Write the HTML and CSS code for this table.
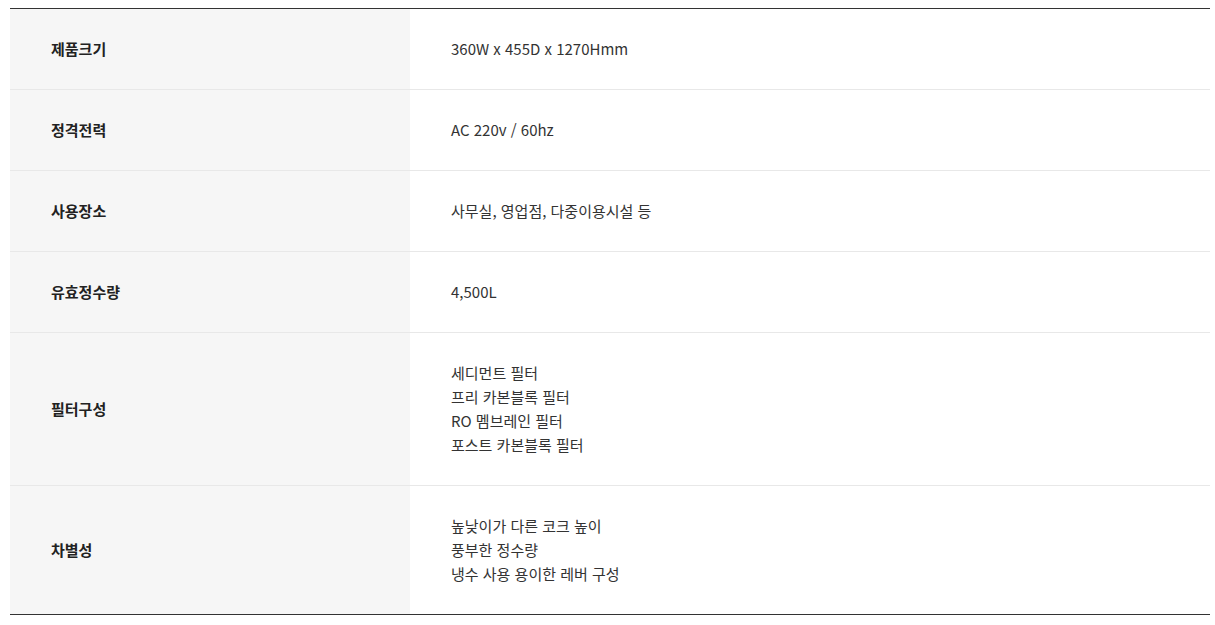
FILE: index.html
```html
<!DOCTYPE html>
<html lang="ko">
<head>
<meta charset="utf-8">
<link rel="stylesheet" href="styles.css">
</head>
<body>
<div class="wrap">
<table class="spec">
<tbody>
<tr><th>제품크기</th><td>360W x 455D x 1270Hmm</td></tr>
<tr><th>정격전력</th><td>AC 220v / 60hz</td></tr>
<tr><th>사용장소</th><td>사무실, 영업점, 다중이용시설 등</td></tr>
<tr><th>유효정수량</th><td>4,500L</td></tr>
<tr><th>필터구성</th><td>세디먼트 필터<br>프리 카본블록 필터<br>RO 멤브레인 필터<br>포스트 카본블록 필터</td></tr>
<tr><th>차별성</th><td>높낮이가 다른 코크 높이<br>풍부한 정수량<br>냉수 사용 용이한 레버 구성</td></tr>
</tbody>
</table>
</div>
</body>
</html>
```

FILE: styles.css
```css
html, body {
  margin: 0;
  padding: 0;
  background: #fff;
}
.wrap {
  padding: 8px 5px 0 10px;
}
.spec {
  width: 1200px;
  border-collapse: collapse;
  border-top: 1px solid #333;
  border-bottom: 1px solid #333;
  font-family: "Noto Sans CJK KR", "Noto Sans", sans-serif;
  font-size: 15px;
  line-height: 24px;
  letter-spacing: 0;
}
.spec th,
.spec td {
  padding: 28px 40px 28px 41px;
  text-align: left;
  vertical-align: middle;
  border-bottom: 1px solid #e8e8e8;
}
.spec tr:last-child th,
.spec tr:last-child td {
  border-bottom: 1px solid #333;
}
.spec th {
  width: 400px;
  box-sizing: border-box;
  background: #f6f6f6;
  color: #222;
  font-weight: 700;
}
.spec td {
  color: #333;
  font-weight: 400;
}
```
